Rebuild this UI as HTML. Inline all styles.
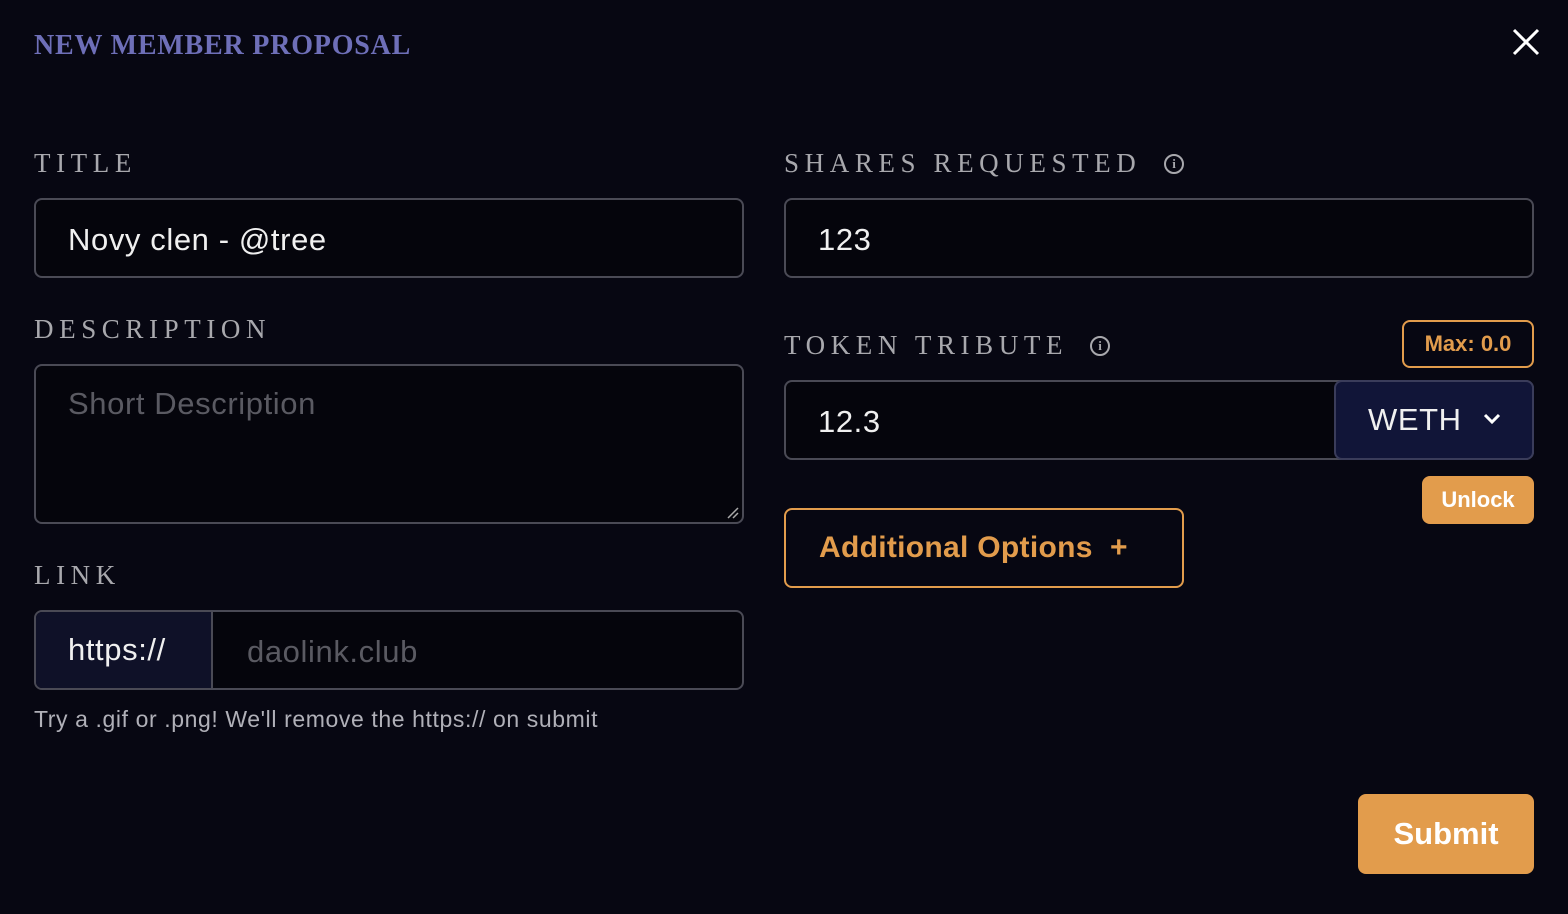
<!DOCTYPE html>
<html><head><style>
*{box-sizing:border-box;margin:0;padding:0}
body{width:1568px;height:914px;background:#070712;position:relative;overflow:hidden;font-family:"Liberation Sans",sans-serif;color:#fff}
.abs{position:absolute;white-space:nowrap}
.h{font-family:"Liberation Serif",serif;font-weight:bold;color:#6e6fb8;font-size:28px;left:34px;top:30px;letter-spacing:0.8px}
.lbl{font-family:"Liberation Serif",serif;color:#a8a8ad;font-size:27px;letter-spacing:5.6px}
.inp{border:2px solid #4a4a55;border-radius:8px;background:#05050c}
.t{font-size:31px;color:#f0f0f0;letter-spacing:0.6px}
.ph{font-size:31px;color:#5a5a62;letter-spacing:0.6px}
.info{width:20px;height:20px;border:2px solid #a8a8ad;border-radius:50%;font-size:13px;color:#a8a8ad;text-align:center;line-height:16px;font-weight:bold;font-family:"Liberation Serif",serif}
</style></head><body>
<div class="abs h">NEW MEMBER PROPOSAL</div>
<svg class="abs" style="left:1512px;top:28px" width="28" height="28"><path d="M2 2L26 26M26 2L2 26" stroke="#fff" stroke-width="3"/></svg>

<div class="abs lbl" style="left:34px;top:148px">TITLE</div>
<div class="abs inp" style="left:34px;top:198px;width:710px;height:80px"></div>
<div class="abs t" style="left:68px;top:222px">Novy clen - @tree</div>

<div class="abs lbl" style="left:34px;top:314px">DESCRIPTION</div>
<div class="abs inp" style="left:34px;top:364px;width:710px;height:160px"></div>
<svg class="abs" style="left:726px;top:506px" width="14" height="14"><path d="M2 12L12 2M7 12L12 7" stroke="#aaa" stroke-width="1.5"/></svg>
<div class="abs ph" style="left:68px;top:386px">Short Description</div>

<div class="abs lbl" style="left:34px;top:560px">LINK</div>
<div class="abs inp" style="left:34px;top:610px;width:710px;height:80px"></div>
<div class="abs" style="left:36px;top:612px;width:177px;height:76px;background:#0f1128;border-right:2px solid #4a4a55;border-radius:6px 0 0 6px"></div>
<div class="abs t" style="left:68px;top:632px">https://</div>
<div class="abs ph" style="left:247px;top:634px">daolink.club</div>
<div class="abs" style="left:34px;top:706px;font-size:23px;letter-spacing:0.6px;color:#b0b0b8">Try a .gif or .png! We'll remove the https:// on submit</div>

<div class="abs lbl" style="left:784px;top:148px">SHARES REQUESTED</div>
<div class="abs info" style="left:1164px;top:154px">i</div>
<div class="abs inp" style="left:784px;top:198px;width:750px;height:80px"></div>
<div class="abs t" style="left:818px;top:222px">123</div>

<div class="abs lbl" style="left:784px;top:330px">TOKEN TRIBUTE</div>
<div class="abs info" style="left:1090px;top:336px">i</div>
<div class="abs" style="left:1402px;top:320px;width:132px;height:48px;border:2px solid #e29c4c;border-radius:8px;color:#e29c4c;font-size:22px;font-weight:bold;text-align:center;line-height:44px">Max: 0.0</div>
<div class="abs inp" style="left:784px;top:380px;width:750px;height:80px"></div>
<div class="abs t" style="left:818px;top:404px">12.3</div>
<div class="abs" style="left:1334px;top:380px;width:200px;height:80px;background:#111538;border:2px solid #3a3c5a;border-radius:8px"></div>
<div class="abs t" style="left:1368px;top:402px">WETH</div>
<svg class="abs" style="left:1482px;top:412px" width="20" height="14"><path d="M3 3L10 10L17 3" stroke="#fff" stroke-width="3" fill="none"/></svg>
<div class="abs" style="left:1422px;top:476px;width:112px;height:48px;background:#e29c4c;border-radius:8px;font-size:22px;font-weight:bold;text-align:center;line-height:48px">Unlock</div>
<div class="abs" style="left:784px;top:508px;width:400px;height:80px;border:2px solid #e29c4c;border-radius:8px;color:#e29c4c;font-size:30px;font-weight:bold;line-height:76px;padding-left:33px;letter-spacing:0.3px">Additional Options&nbsp;&nbsp;+</div>

<div class="abs" style="left:1358px;top:794px;width:176px;height:80px;background:#e29c4c;border-radius:8px;font-size:31px;font-weight:bold;text-align:center;line-height:80px">Submit</div>
</body></html>
